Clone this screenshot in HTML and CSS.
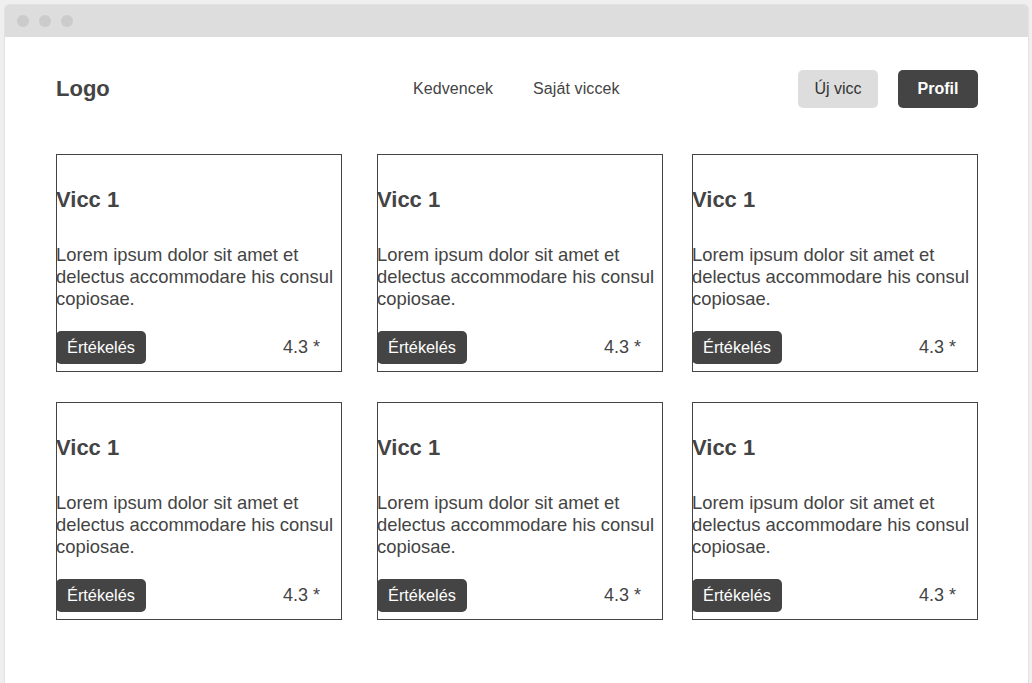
FILE: index.html
```html
<!DOCTYPE html>
<html lang="hu">
<head>
<meta charset="utf-8">
<title>Viccek</title>
<link rel="stylesheet" href="styles.css">
</head>
<body>
<div class="window">
  <div class="titlebar">
    <span class="dot"></span><span class="dot"></span><span class="dot"></span>
  </div>
  <div class="page">
    <header class="header">
      <div class="logo">Logo</div>
      <nav class="nav">
        <a class="nav-link">Kedvencek</a>
        <a class="nav-link">Saját viccek</a>
      </nav>
      <div class="actions">
        <button class="btn btn-light">Új vicc</button>
        <button class="btn btn-dark">Profil</button>
      </div>
    </header>
    <main class="grid">
      <div class="card">
        <h2 class="card-title">Vicc 1</h2>
        <p class="card-text">Lorem ipsum dolor sit amet et delectus accommodare his consul copiosae.</p>
        <div class="card-footer"><button class="rate">Értékelés</button><span class="score">4.3 *</span></div>
      </div>
      <div class="card">
        <h2 class="card-title">Vicc 1</h2>
        <p class="card-text">Lorem ipsum dolor sit amet et delectus accommodare his consul copiosae.</p>
        <div class="card-footer"><button class="rate">Értékelés</button><span class="score">4.3 *</span></div>
      </div>
      <div class="card">
        <h2 class="card-title">Vicc 1</h2>
        <p class="card-text">Lorem ipsum dolor sit amet et delectus accommodare his consul copiosae.</p>
        <div class="card-footer"><button class="rate">Értékelés</button><span class="score">4.3 *</span></div>
      </div>
      <div class="card">
        <h2 class="card-title">Vicc 1</h2>
        <p class="card-text">Lorem ipsum dolor sit amet et delectus accommodare his consul copiosae.</p>
        <div class="card-footer"><button class="rate">Értékelés</button><span class="score">4.3 *</span></div>
      </div>
      <div class="card">
        <h2 class="card-title">Vicc 1</h2>
        <p class="card-text">Lorem ipsum dolor sit amet et delectus accommodare his consul copiosae.</p>
        <div class="card-footer"><button class="rate">Értékelés</button><span class="score">4.3 *</span></div>
      </div>
      <div class="card">
        <h2 class="card-title">Vicc 1</h2>
        <p class="card-text">Lorem ipsum dolor sit amet et delectus accommodare his consul copiosae.</p>
        <div class="card-footer"><button class="rate">Értékelés</button><span class="score">4.3 *</span></div>
      </div>
    </main>
  </div>
</div>
</body>
</html>
```
FILE: styles.css
```css
* { box-sizing: border-box; }
html, body { margin: 0; padding: 0; }
body {
  background: #efefef;
  font-family: "Liberation Sans", Arial, sans-serif;
  color: #444;
  height: 683px;
  overflow: hidden;
}
.window {
  margin: 4px 0 0 4px;
  width: 1025px;
  height: 700px;
  background: #fff;
  border: 1px solid #e2e2e2;
  border-radius: 5px 5px 0 0;
  overflow: hidden;
}
.titlebar {
  height: 32px;
  background: #dddddd;
  display: flex;
  align-items: center;
  gap: 10px;
  padding-left: 12px;
}
.dot {
  width: 12px;
  height: 12px;
  border-radius: 50%;
  background: #cbcbcb;
}
.page {
  padding: 32px 50px 0 51px;
}
.header {
  display: flex;
  align-items: center;
  height: 38px;
  padding-top: 1px;
}
.logo {
  font-size: 22px;
  font-weight: bold;
  width: 357px;
}
.nav {
  display: flex;
  gap: 40px;
  flex: 1;
}
.nav-link {
  font-size: 16px;
  letter-spacing: 0.1px;
  color: #444;
}
.actions {
  display: flex;
  gap: 20px;
}
.btn {
  width: 80px;
  height: 38px;
  border: none;
  border-radius: 5px;
  font-family: inherit;
  font-size: 16px;
}
.btn-light { background: #dddddd; color: #333; }
.btn-dark { background: #444; color: #fff; font-weight: bold; }
.grid {
  margin-top: 47px;
  display: grid;
  grid-template-columns: 286px 286px 286px;
  justify-content: space-between;
  row-gap: 30px;
}
.card {
  border: 1px solid #444;
  width: 286px;
  height: 218px;
  display: flex;
  flex-direction: column;
  padding: 32px 0 7px 0;
}
.card:nth-child(3n+2) { margin-left: 3px; }
.card-title,
.card-text,
.card-footer { margin-left: -1px; }
.card-title {
  margin-top: 0;
  margin-bottom: 0;
  font-size: 22px;
  line-height: 26px;
  font-weight: bold;
}
.card-text {
  margin-top: 31px;
  margin-bottom: 0;
  font-size: 18.4px;
  line-height: 22px;
}
.card-footer {
  margin-top: auto;
  display: flex;
  align-items: center;
  justify-content: space-between;
  padding-right: 21px;
}
.rate {
  width: 90px;
  height: 33px;
  border: none;
  border-radius: 5px;
  background: #444;
  color: #fff;
  font-family: inherit;
  font-size: 16.3px;
}
.score {
  font-size: 18px;
}
```
